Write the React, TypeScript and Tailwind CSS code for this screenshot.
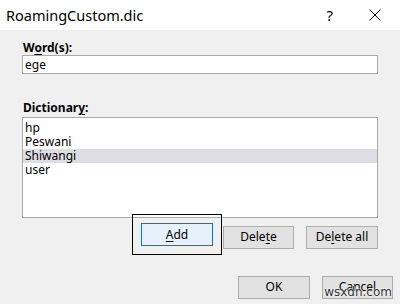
function Btn({
  label,
  under,
  w,
  focused,
}: {
  label: string
  under?: number
  w: string
  focused?: boolean
}) {
  const hasKey = under !== undefined
  return (
    <button
      className={
        focused
          ? `${w} h-[23px] border border-[#0078d7] bg-[#e5f1fb] text-[12px] text-black outline outline-1 outline-black outline-offset-[8px]`
          : `${w} h-[23px] border border-[#adadad] bg-[#e1e1e1] text-[12px] text-black`
      }
    >
      {hasKey ? (
        <>
          {label.slice(0, under)}
          <span className="underline underline-offset-2">{label.slice(under, under + 1)}</span>
          {label.slice(under + 1)}
        </>
      ) : (
        label
      )}
    </button>
  )
}

const WORDS = ['hp', 'Peswani', 'Shiwangi', 'user']

export default function App() {
  return (
    <div
      className="relative flex h-[304px] w-[400px] flex-col overflow-hidden bg-white"
      style={{ fontFamily: '"Noto Sans", "Open Sans", sans-serif' }}
    >
      {/* title bar */}
      <div className="flex h-[30px] shrink-0 items-center bg-white pl-[6px]">
        <span className="text-[14.5px] leading-none text-black">RoamingCustom.dic</span>
        <span className="ml-auto mr-[36px] text-[15px] leading-none text-black">?</span>
        <svg width="12" height="12" viewBox="0 0 12 12" className="mr-[19px]">
          <path d="M0.5 0.5 L11.5 11.5 M11.5 0.5 L0.5 11.5" stroke="#000" strokeWidth="1" />
        </svg>
      </div>

      <div className="flex flex-1 flex-col bg-[#f0f0f0] px-[22px] pt-[11px]">
        <label className="pl-[1px] text-[12px] font-bold leading-[14px] text-black">
          W<span className="underline underline-offset-2">o</span>rd(s):
        </label>
        <div className="flex h-[19px] items-center border border-[#a9a9a9] bg-white pl-[2px] text-[12px] text-black">
          ege
        </div>

        <label className="mt-[27px] pl-[1px] text-[12px] font-bold leading-[14px] text-black">
          Dictionar<span className="underline underline-offset-2">y</span>:
        </label>
        <div className="mt-[2px] h-[101px] border border-[#a9a9a9] bg-white pt-[3px]">
          {WORDS.map((w) => (
            <div
              key={w}
              className={
                w === 'Shiwangi'
                  ? 'h-[14px] bg-[#dddde3] pl-[2px] text-[12px] leading-[14px] text-black'
                  : 'h-[14px] pl-[2px] text-[12px] leading-[14px] text-black'
              }
            >
              {w}
            </div>
          ))}
        </div>

        <div className="mt-[5px] flex justify-end">
          <Btn label="Add" under={0} w="w-[72px]" focused />
          <div className="ml-[10px]">
            <Btn label="Delete" under={4} w="w-[71px]" />
          </div>
          <div className="ml-[12px]">
            <Btn label="Delete all" under={2} w="w-[72px]" />
          </div>
        </div>

        <div className="-mr-[15px] mt-[27px] flex justify-end gap-[12px]">
          <Btn label="OK" w="w-[72px]" />
          <Btn label="Cancel" w="w-[71px]" />
        </div>
      </div>

      {/* watermark */}
      <span
        className="absolute right-[8px] top-[286px] text-[12px] leading-none text-[#333]"
        style={{ fontFamily: '"DejaVu Sans", sans-serif', textShadow: '0 0 2px #fff, 0 0 2px #fff' }}
      >
        wsxdn.com
      </span>
    </div>
  )
}
